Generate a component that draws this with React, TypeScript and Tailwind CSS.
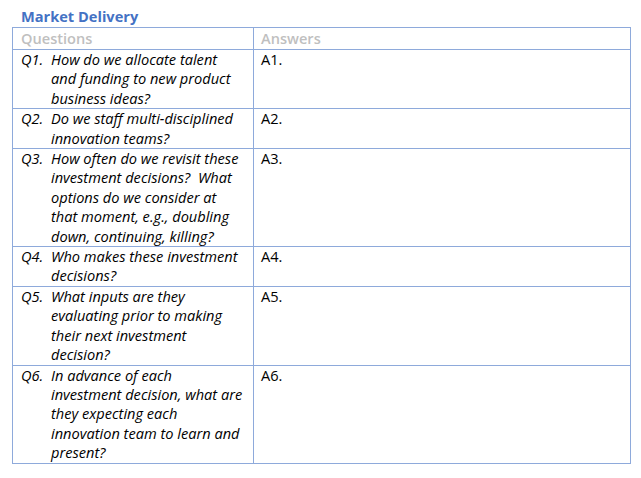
import React from 'react'

type Row = { q: string; lines: string[]; a: string }

const rows: Row[] = [
  {
    q: 'Q1.',
    lines: ['How do we allocate talent', 'and funding to new product', 'business ideas?'],
    a: 'A1.',
  },
  { q: 'Q2.', lines: ['Do we staff multi-disciplined', 'innovation teams?'], a: 'A2.' },
  {
    q: 'Q3.',
    lines: [
      'How often do we revisit these',
      'investment decisions?  What',
      'options do we consider at',
      'that moment, e.g., doubling',
      'down, continuing, killing?',
    ],
    a: 'A3.',
  },
  { q: 'Q4.', lines: ['Who makes these investment', 'decisions?'], a: 'A4.' },
  {
    q: 'Q5.',
    lines: ['What inputs are they', 'evaluating prior to making', 'their next investment', 'decision?'],
    a: 'A5.',
  },
  {
    q: 'Q6.',
    lines: [
      'In advance of each',
      'investment decision, what are',
      'they expecting each',
      'innovation team to learn and',
      'present?',
    ],
    a: 'A6.',
  },
]

export default function App() {
  return (
    <div className="min-h-screen bg-white pl-3 pt-[5px] font-['Open_Sans','Liberation_Sans',sans-serif] text-[14.6px] text-black">
      <h1 className="pl-[9px] text-[14.6px] font-bold leading-[22px] text-[#4472c4]">Market Delivery</h1>

      <table className="w-[619px] table-fixed border-collapse">
        <colgroup>
          <col className="w-[241px]" />
          <col />
        </colgroup>
        <thead>
          <tr className="h-[22px]">
            <th className="border border-[#8eaadb] pl-[8px] text-left align-top font-semibold leading-[20px] text-[#bfbfbf]">
              Questions
            </th>
            <th className="border border-[#8eaadb] pl-[7px] text-left align-top font-semibold leading-[20px] text-[#bfbfbf]">
              Answers
            </th>
          </tr>
        </thead>
        <tbody>
          {rows.map((r) => (
            <tr key={r.q}>
              <td className="border border-[#8eaadb] pl-[8px] pr-1 align-top leading-[19.4px]">
                <div className="flex italic">
                  <span className="w-[30px] shrink-0">{r.q}</span>
                  <div className="flex flex-col whitespace-pre">
                    {r.lines.map((l) => (
                      <span key={l}>{l}</span>
                    ))}
                  </div>
                </div>
              </td>
              <td className="border border-[#8eaadb] pl-[7px] align-top leading-[19.4px]">{r.a}</td>
            </tr>
          ))}
        </tbody>
      </table>
    </div>
  )
}
